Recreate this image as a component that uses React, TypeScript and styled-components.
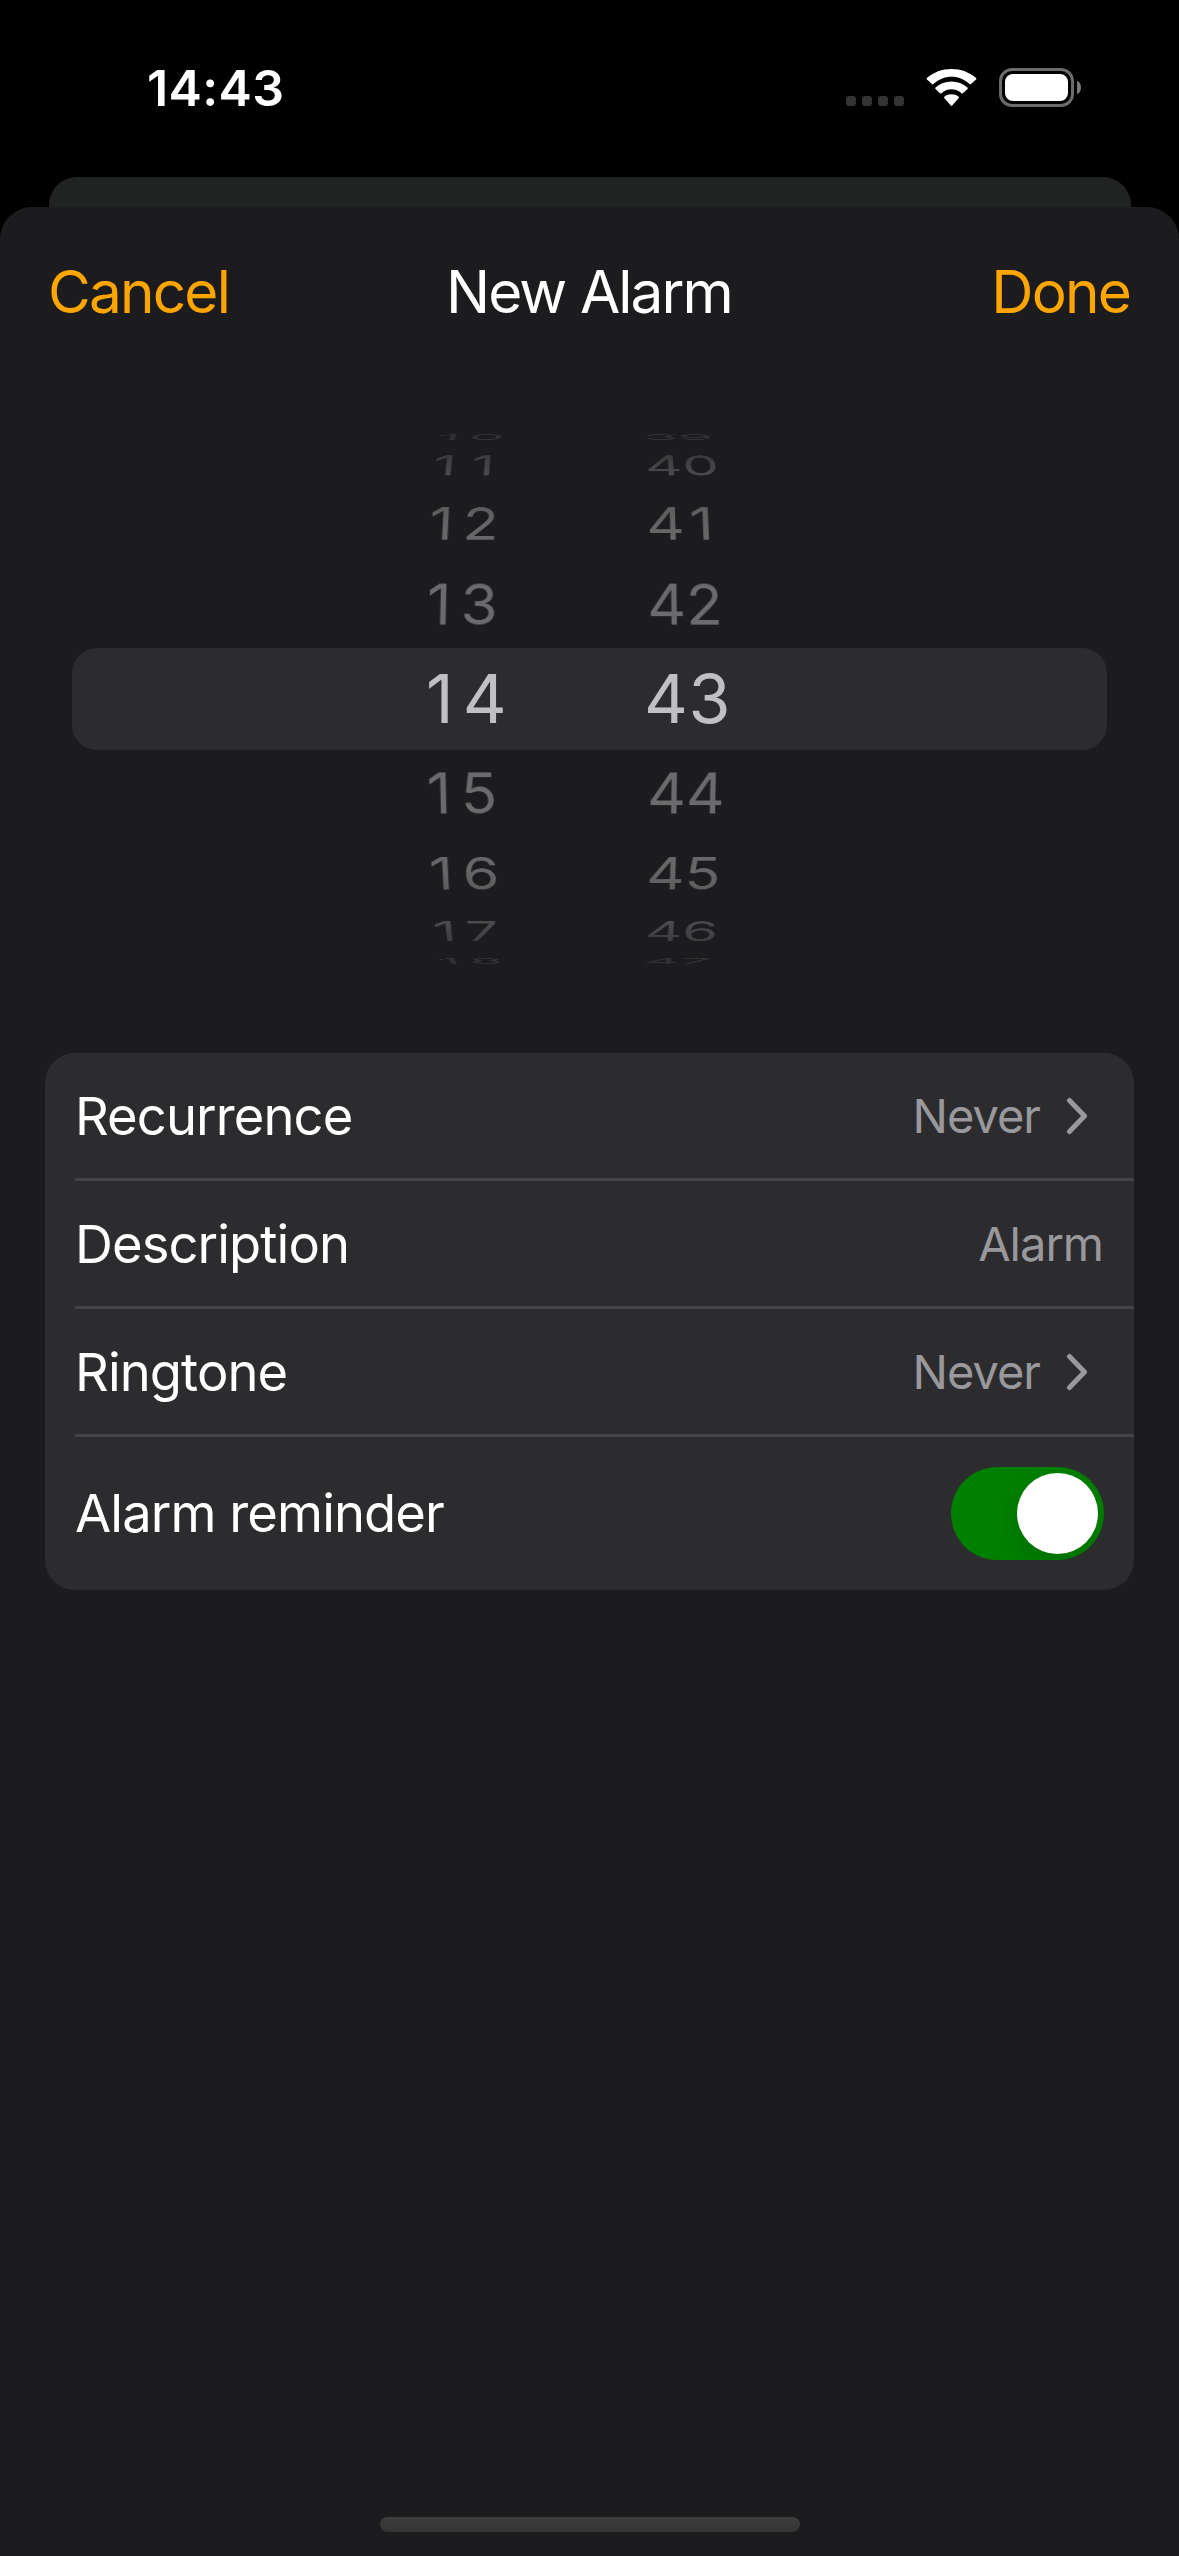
import React, { useState } from "react";
import styled, { createGlobalStyle, css } from "styled-components";

const GlobalStyle = createGlobalStyle`
  * { box-sizing: border-box; }
  html, body { margin: 0; padding: 0; background: #000; }
  button { font: inherit; color: inherit; border: 0; padding: 0; background: none; }
`;

const Screen = styled.main`
  width: 1179px;
  height: 2556px;
  display: flex;
  flex-direction: column;
  overflow: hidden;
  background: #000;
  color: #fff;
  font-family: Inter, "Liberation Sans", sans-serif;
`;

const StatusBar = styled.header`
  height: 177px;
  flex: none;
  display: flex;
  justify-content: space-between;
  align-items: center;
  padding: 0 98px 2px 147px;
`;

const Clock = styled.time`
  font-size: 50px;
  font-weight: 600;
  line-height: 60px;
  letter-spacing: 0.4px;
`;

const StatusIcons = styled.div`
  display: flex;
  align-items: center;
`;

const SignalDots = styled.div`
  display: flex;
  gap: 6px;
  margin: 27px 22px 0 0;
`;

const SignalDot = styled.span`
  width: 10px;
  height: 10px;
  border-radius: 3px;
  background: #333;
`;

const Wifi = styled.svg`
  width: 51px;
  height: 38px;
  margin-right: 22px;
`;

const Battery = styled.div`
  display: flex;
  align-items: center;
  gap: 3px;
`;

const BatteryCase = styled.div`
  width: 75px;
  height: 39px;
  padding: 3px;
  border: 3px solid #6b6b6b;
  border-radius: 13px;
`;

const BatteryLevel = styled.div`
  height: 100%;
  border-radius: 8px;
  background: #fff;
`;

const BatteryCap = styled.div`
  width: 4px;
  height: 13px;
  border-radius: 0 4px 4px 0 / 0 6.5px 6.5px 0;
  background: #7a7a7a;
`;

const SheetBehind = styled.div`
  flex: none;
  height: 60px;
  margin: 0 48.5px -30px;
  border-radius: 28px 28px 0 0;
  background: #212322;
`;

const Sheet = styled.section`
  flex: 1;
  display: flex;
  flex-direction: column;
  background: #1c1c1e;
  border-radius: 32px 32px 0 0;
`;

const NavBar = styled.nav`
  height: 170px;
  display: grid;
  grid-template-columns: 1fr auto 1fr;
  align-items: center;
  padding: 0 49px 0 48px;
  font-size: 58.5px;
  line-height: 70px;
  letter-spacing: -1.9px;
`;

const Title = styled.h1`
  margin: 0;
  font: inherit;
`;

const NavButton = styled.button<{ $end?: boolean }>`
  justify-self: ${(p) => (p.$end ? "end" : "start")};
  color: #ffa500;
  letter-spacing: -1.8px;
`;

const Wheel = styled.div`
  display: flex;
  flex-direction: column;
  height: 540px;
  margin: 52px 72px 84px;
  mask-image: linear-gradient(
    rgba(0, 0, 0, 0.24) 0,
    rgba(0, 0, 0, 0.28) 14px,
    rgba(0, 0, 0, 0.56) 42px,
    rgba(0, 0, 0, 0.94) 96px,
    #000 150px,
    #000 390px,
    rgba(0, 0, 0, 0.94) 444px,
    rgba(0, 0, 0, 0.56) 498px,
    rgba(0, 0, 0, 0.28) 526px,
    rgba(0, 0, 0, 0.24) 540px
  );
`;

const WheelRow = styled.div<{ $distance: number }>`
  flex: none;
  height: ${(p) => [102, 87, 74.4, 41.2, 16.4][Math.abs(p.$distance)]}px;
  display: grid;
  grid-template-columns: 356px 220px;
  align-items: center;
  line-height: 0;
  padding-bottom: 2px;
  ${(p) =>
    p.$distance === 0
      ? css`
          border-radius: 25px;
          background: #2c2c30;
          color: #c0c0c3;
          font-size: 68px;
        `
      : css`
          color: #6b6b6d;
          font-size: 60.5px;
          transform: scale(${[1, 0.995, 0.98, 0.957, 0.93][Math.abs(p.$distance)]}) perspective(2500px)
            rotateX(${-p.$distance * 20.5}deg);
        `}
`;

/* A trailing 1 is a narrow glyph, so it gets extra room to keep the digit pitch. */
const Hours = styled.span<{ $selected: boolean; $narrow: boolean }>`
  padding-left: 354px;
  letter-spacing: ${(p) => (p.$selected ? 9 : 9.5) + (p.$narrow ? 6 : 0)}px;
`;

const Minutes = styled.span<{ $selected: boolean; $narrow: boolean }>`
  padding-left: ${(p) => (p.$selected ? 216 : 219.5)}px;
  letter-spacing: ${(p) => (p.$selected ? 0.5 : 0) + (p.$narrow ? 6 : 0)}px;
`;

const Card = styled.div`
  flex: none;
  margin: 0 45px;
  padding-left: 30px;
  border-radius: 30px;
  background: #2c2c2e;
`;

const Row = styled.div<{ $tall?: boolean }>`
  height: ${(p) => (p.$tall ? 153 : 128)}px;
  display: flex;
  align-items: center;
  justify-content: space-between;
  padding-right: 30px;
  border-bottom: ${(p) => (p.$tall ? "none" : "3px solid #444446")};
`;

const Label = styled.span<{ $raised?: boolean }>`
  font-size: 52.5px;
  line-height: 64px;
  letter-spacing: -0.9px;
  padding-bottom: ${(p) => (p.$raised ? 2 : 0)}px;
`;

const Value = styled.span`
  display: flex;
  align-items: center;
  color: #98989d;
  font-size: 47px;
  line-height: 56px;
  letter-spacing: -1px;
  padding-right: 1px;
`;

const Chevron = styled.svg`
  width: 22px;
  height: 38px;
  margin: 0 15px 0 26px;
`;

const Track = styled.button<{ $on: boolean }>`
  width: 153px;
  height: 93px;
  padding: 6px;
  border-radius: 47px;
  display: flex;
  justify-content: ${(p) => (p.$on ? "flex-end" : "flex-start")};
  background: ${(p) => (p.$on ? "#008000" : "#39393d")};
  overflow: hidden;
`;

const Knob = styled.span`
  width: 81px;
  height: 81px;
  border-radius: 50%;
  background: #fff;
  box-shadow: 0 9px 24px rgba(0, 0, 0, 0.15);
`;

const HomeIndicator = styled.div`
  width: 420px;
  height: 15px;
  margin: auto auto 24px;
  border-radius: 8px;
  background: linear-gradient(#3e3e3e, #343434);
`;

const offsets = [-4, -3, -2, -1, 0, 1, 2, 3, 4];

function TimeWheel({ hour, minute }: { hour: number; minute: number }) {
  return (
    <Wheel>
      {offsets.map((d) => (
        <WheelRow key={d} $distance={d}>
          <Hours $selected={d === 0} $narrow={(hour + d) % 10 === 1}>
            {hour + d}
          </Hours>
          <Minutes $selected={d === 0} $narrow={(minute + d) % 10 === 1}>
            {minute + d}
          </Minutes>
        </WheelRow>
      ))}
    </Wheel>
  );
}

function Disclosure() {
  return (
    <Chevron viewBox="0 0 22 38" fill="none" stroke="#98989d" strokeWidth="5" strokeLinecap="round" strokeLinejoin="round">
      <path d="M3.5 3.5 18.5 19 3.5 34.5" />
    </Chevron>
  );
}

function Switch() {
  const [on, setOn] = useState(true);
  return (
    <Track role="switch" aria-checked={on} $on={on} onClick={() => setOn(!on)}>
      <Knob />
    </Track>
  );
}

export default function App() {
  return (
    <>
      <GlobalStyle />
      <Screen>
        <StatusBar>
          <Clock>14:43</Clock>
          <StatusIcons>
            <SignalDots>
              <SignalDot />
              <SignalDot />
              <SignalDot />
              <SignalDot />
            </SignalDots>
            <Wifi viewBox="0 0 51 38" fill="#fff">
              <path d="M25.5 7.8c6.8 0 13.2 2.6 18.1 7.3.4.4 1 .4 1.4 0l5.1-4.6c.4-.4.4-1 0-1.4C43.6 3.2 34.8 0 25.5 0S7.4 3.2.9 9.1c-.4.4-.4 1 0 1.4l5.1 4.6c.4.4 1 .4 1.4 0C12.3 10.4 18.7 7.8 25.5 7.8Z" />
              <path d="M25.5 20.3c3.7 0 7.3 1.4 10 3.9.4.4 1 .4 1.4 0l4.6-4.3c.4-.4.4-1 0-1.4-4.4-3.9-10-6-16-6s-11.6 2.1-16 6c-.4.4-.4 1 0 1.4l4.6 4.3c.4.4 1 .4 1.4 0 2.7-2.5 6.3-3.9 10-3.9Z" />
              <path d="M32.7 29.1c.4-.4.4-1-.1-1.4-4.1-3.2-10.1-3.2-14.2 0-.5.4-.5 1-.1 1.4l6.5 7.5c.4.4 1 .4 1.4 0Z" />
            </Wifi>
            <Battery>
              <BatteryCase>
                <BatteryLevel />
              </BatteryCase>
              <BatteryCap />
            </Battery>
          </StatusIcons>
        </StatusBar>
        <SheetBehind />
        <Sheet>
          <NavBar>
            <NavButton>Cancel</NavButton>
            <Title>New Alarm</Title>
            <NavButton $end>Done</NavButton>
          </NavBar>
          <TimeWheel hour={14} minute={43} />
          <Card>
            <Row>
              <Label>Recurrence</Label>
              <Value>
                Never
                <Disclosure />
              </Value>
            </Row>
            <Row>
              <Label>Description</Label>
              <Value>Alarm</Value>
            </Row>
            <Row>
              <Label>Ringtone</Label>
              <Value>
                Never
                <Disclosure />
              </Value>
            </Row>
            <Row $tall>
              <Label $raised>Alarm reminder</Label>
              <Switch />
            </Row>
          </Card>
          <HomeIndicator />
        </Sheet>
      </Screen>
    </>
  );
}
